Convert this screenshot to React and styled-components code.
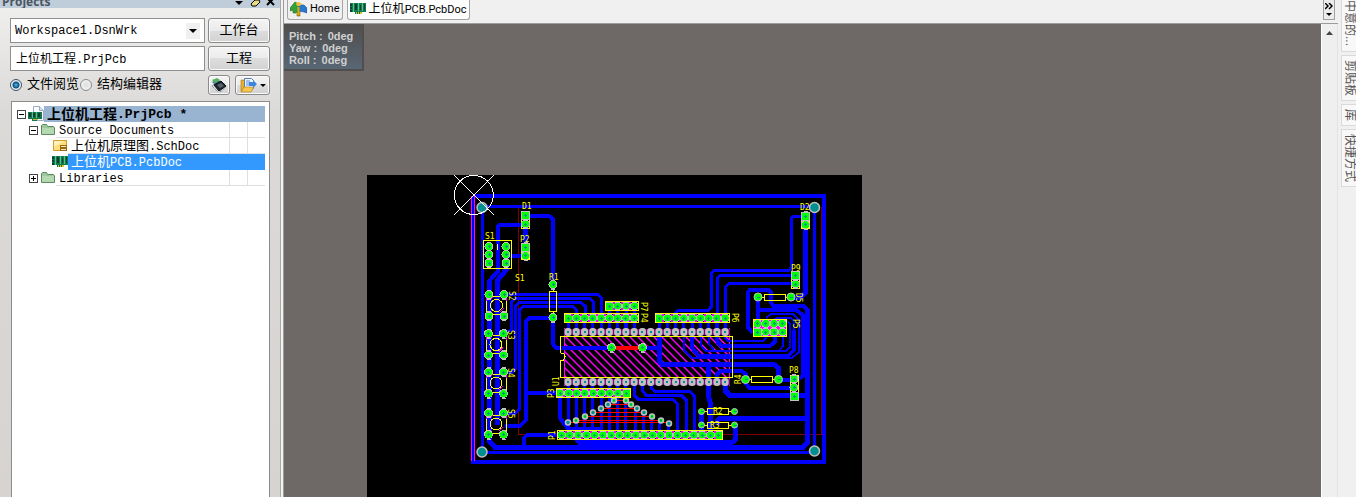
import React, { useState } from "react";
import styled, { createGlobalStyle } from "styled-components";

const GlobalStyle = createGlobalStyle`
    html, body {
        margin: 0;
        background: #f0f0f0;
    }

    *, *::before, *::after {
        box-sizing: border-box;
    }

    button, input, select {
        font: inherit;
        color: inherit;
        margin: 0;
    }
`

const mono = `"Liberation Mono", "Noto Sans CJK SC", monospace`;
const sans = `"Liberation Sans", "Noto Sans CJK SC", sans-serif`;

const Page = styled.div`
    display: flex;
    min-height: 100vh;
    font-family: ${mono};
    font-size: 12px;
    line-height: 16px;
    color: #000;
    overflow: hidden;
`

const Panel = styled.aside`
    flex: 0 0 280px;
    display: flex;
    flex-direction: column;
    background: linear-gradient(#f0f0ef, #dcdad8 110px, #d6d3d1);
`

const PanelTitle = styled.header`
    display: flex;
    justify-content: space-between;
    align-items: flex-end;
    height: 8px;
    padding: 0 4px 0 2px;
    overflow: hidden;
    background: #bfcddb;

    h1 {
        margin: 0;
        font: bold 12px/12px "Open Sans", sans-serif;
        color: #4c5560;
    }
`

const Controls = styled.div`
    display: grid;
    grid-template-columns: 1fr 62px;
    gap: 3px;
    padding: 10px 10px 0;
`

const SelectBox = styled.div`
    display: flex;
    align-items: center;
    height: 25px;
    padding-right: 4px;
    border: 1px solid #8e8f8f;
    background: #fff;

    select {
        flex: 1;
        min-width: 0;
        padding: 0 4px;
        border: none;
        outline: none;
        appearance: none;
        background: none;
    }
`

const ArrowBox = styled.span`
    display: grid;
    place-items: center;
    width: 14px;
    height: 16px;
    background: #f0f0f0;
    pointer-events: none;
`

const TextBox = styled.input`
    width: 100%;
    height: 25px;
    padding: 0 5px 2px;
    border: 1px solid #8e8f8f;
    background: #fff;
    outline: none;
`

const Button = styled.button`
    display: flex;
    align-items: center;
    justify-content: center;
    gap: 3px;
    width: ${props => props.$width || "100%"};
    height: ${props => props.$small ? "20px" : "25px"};
    padding: 0;
    border: 1px solid #8a8a8a;
    border-radius: 3px;
    font-size: 13px;
    background: linear-gradient(#f4f4f4, #ebebeb 50%, #dddddd 50%, #d2d2d2);
    box-shadow: inset 0 0 0 1px #fafafa;
`

const ViewRow = styled.div`
    display: flex;
    align-items: center;
    height: 28px;
    padding: 0 10px;
    font-size: 13px;
`

const Radio = styled.label`
    display: flex;
    align-items: center;
    gap: 5px;
    margin-right: 1px;
    white-space: nowrap;

    input {
        appearance: none;
        width: 12px;
        height: 12px;
        border: 1px solid #858b91;
        border-radius: 50%;
        background: radial-gradient(#dedede, #f8f8f8);
    }

    input:checked {
        border-color: #35536e;
        background: radial-gradient(circle, #3fc0ee 0, #114a78 3px, #e8eef2 4px);
    }
`

const ViewButtons = styled.div`
    display: flex;
    gap: 5px;
    margin-left: auto;
`

const Tree = styled.ul`
    flex: 1;
    margin: 2px 10px 0 11px;
    padding: 4px 4px 0 5px;
    border: 1px solid #8c8c8c;
    border-bottom: none;
    background: #fff;
    list-style: none;
`

const TreeRow = styled.li`
    display: flex;
    align-items: center;
    height: 16px;
    padding-left: ${props => props.$level * 12}px;
    white-space: pre;

    > svg {
        flex: none;
    }
`

const Toggle = styled.button`
    display: grid;
    place-items: center;
    flex: none;
    width: 9px;
    height: 9px;
    margin-right: 2px;
    padding: 0;
    border: 1px solid #444;
    background: #fff;
    visibility: ${props => props.$hidden ? "hidden" : "visible"};
`

const TreeLabel = styled.span`
    flex: 1;
    display: flex;
    align-items: center;
    height: 16px;
    padding: 2px 0 0 3px;
    border-bottom: ${props => props.$tone ? "none" : "1px solid #dfdfdf"};
    font-size: ${props => props.$tone === "project" ? 13 : 12}px;
    font-weight: ${props => props.$tone === "project" ? "bold" : "normal"};
    color: ${props => props.$tone === "active" ? "#fff" : "#000"};
    background: ${props => props.$tone === "active" ? "#3399ff" : props.$tone === "project" ? "#99b4d1" : "none"};
`

const Cjk = styled.span`
    font-size: ${props => props.$size || 13}px;
`

const TreeCell = styled.span`
    width: 18px;
    height: 16px;
    border-left: 1px solid #dfdfdf;
    border-bottom: 1px solid #dfdfdf;
`

const Splitter = styled.div`
    flex: 0 0 4px;
    background: #f2f2f2;
    border-left: 1px solid #a8a8a8;
    border-right: 1px solid #9b9b9b;
`

const Main = styled.main`
    flex: 1;
    min-width: 0;
    display: flex;
    flex-direction: column;
    font-family: ${sans};
`

const TabBar = styled.nav`
    display: flex;
    align-items: flex-start;
    gap: 4px;
    height: 24px;
    padding: 0 3px;
    border-bottom: 1px solid #9c9c9c;
    background: #f0f0f0;
`

const Tab = styled.button`
    display: flex;
    align-items: center;
    gap: 3px;
    height: 20px;
    padding: 0 2px 1px;
    border: 1px solid #a5a5a5;
    border-top: none;
    border-radius: 0 0 3px 3px;
    font: 11px/16px Roboto, "Noto Sans CJK SC", sans-serif;
    background: ${props => props.$active ? "#fdfdfd" : "#f0f0f0"};
    white-space: nowrap;
`

const MoreTabs = styled.button`
    display: grid;
    place-items: center;
    width: 12px;
    height: 20px;
    margin-left: auto;
    padding: 0;
    border: 1px solid #a0a0a0;
    border-top: none;
    background: #ececec;
`

const Workspace = styled.div`
    flex: 1;
    display: flex;
`

const Canvas = styled.section`
    position: relative;
    flex: 1;
    padding: 151px 0 0 83px;
    background: #6e6967;

    > svg {
        display: block;
    }
`

const Orientation = styled.dl`
    position: absolute;
    top: 0;
    left: 0;
    width: 80px;
    margin: 0;
    padding: 6px 5px 3px;
    border: solid #504e4d;
    border-width: 0 2px 2px 0;
    font: bold 11px/12px ${sans};
    color: #d0d0d0;
    background: linear-gradient(#504e4d, #586674);

    div {
        display: flex;
        gap: 5px;
    }

    dt, dd {
        margin: 0;
    }
`

const Scrollbar = styled.div`
    flex: 0 0 17px;
    display: flex;
    justify-content: center;
    padding-top: 7px;
    border-left: 1px solid #fff;
    border-right: 1px solid #e3e3e3;
    background: #efefef;
`

const SideTabs = styled.nav`
    flex: 0 0 18px;
    min-width: 0;
    display: flex;
    flex-direction: column;
    gap: 3px;
    padding-left: 3px;
    background: #f0f0f0;
`

const SideTab = styled.button`
    width: 100%;
    height: ${props => props.$height}px;
    padding: ${props => props.$cut ? "0 0 0 2px" : "4px 0 4px 2px"};
    border: 1px solid #dadada;
    border-right: none;
    border-top-width: ${props => props.$cut ? 0 : 1}px;
    font: 12px/12px ${sans};
    color: #555;
    background: #f8f8f8;
    writing-mode: vertical-rl;
    text-orientation: sideways;
    text-align: left;
    white-space: nowrap;
`

const BoardLabel = styled.text`
    font: 8px "DejaVu Sans Mono", monospace;
    fill: #ffff00;
`

const Caret = ({ width = 8 }) => (
    <svg width={width} height={width / 2} viewBox="0 0 8 4"><path d="M0 0h8L4 4z" fill="#000" /></svg>
)

const BoardIcon = () => (
    <svg width="16" height="14" viewBox="0 0 16 14">
        <path d="M0 1h16v9h-5v2H5v-2H0z" fill="#0f7a4c" />
        <path d="M0 2h2v2H0zM0 5h2v2H0zM0 8h2v2H0zM5 2h2v6H5z" fill="#103c36" />
        <path d="M3.500 1v9M8.500 1v8M12.500 1v8" stroke="#58c483" />
        <path d="M10 3h1v5h-1zM14 2h1v6h-1z" fill="#173f3f" />
        <path d="M6 10h6v2H6z" fill="#d5c637" />
        <path d="M7.500 10v2M9.500 10v2" stroke="#147040" />
    </svg>
)

const ProjectIcon = () => (
    <svg width="16" height="16" viewBox="0 0 16 16">
        <path d="M5.500 .5h6l4 4v10h-10z" fill="#f7faff" stroke="#9aabc0" />
        <path d="M11.500 .5v4h4" fill="#cfe0ef" stroke="#9aabc0" />
        <path d="M0 6h14v7H9v2H4v-2H0z" fill="#14744a" />
        <path d="M1 7h2v4H1zM5 7h2v4H5zM10 7h2v4h-2z" fill="#103c36" />
        <path d="M4.500 6v6M8.500 6v6" stroke="#58c483" />
        <path d="M5 13h5v1H5z" fill="#c9bd3a" />
    </svg>
)

const FolderIcon = () => (
    <svg width="16" height="14" viewBox="0 0 16 14">
        <path d="M1.500 11.500v-9l1-1h4l1 2h6l1 1v7z" fill="#9cc99a" stroke="#5e8a62" />
        <path d="M2 5h12v6H2z" fill="#b4d8b0" />
    </svg>
)

const SchematicIcon = () => (
    <svg width="16" height="14" viewBox="0 0 16 14">
        <path d="M1.500 1.500h13v10h-13z" fill="#ffdf79" stroke="#d39b28" />
        <path d="M2 2h10L2 8z" fill="#fff2b8" />
        <path d="M8 6h7v6H8z" fill="#9a6a12" />
        <path d="M9 7.500h5M9 10.500h5" stroke="#ffe9a8" />
    </svg>
)

const HomeIcon = () => (
    <svg width="17" height="16" viewBox="0 0 17 16">
        <path d="M7 3h3v12H7z" fill="#c99410" stroke="#7c5907" strokeWidth=".6" />
        <path d="M0 7l5-6 4 2v5l-3 4H3V9L0 10z" fill="#35a03a" stroke="#1d6b25" strokeWidth=".6" />
        <path d="M9 4h5l3 3v5l-3-1-5-1z" fill="#2878d0" stroke="#174f98" strokeWidth=".6" />
        <path d="M6 2l3-1 3 2-2 2H7z" fill="#edbb39" />
        <path d="M7.500 6h2v8h-2z" fill="#dba91e" />
    </svg>
)

const ChipIcon = () => (
    <svg width="16" height="16" viewBox="0 0 16 16">
        <path d="M1 5l5-3 8 5-6 4z" fill="#3b7f92" />
        <path d="M1 3l5-2 3 2-5 3z" fill="#57b35e" />
        <path d="M3 8l7-4 5 5-7 5z" fill="#20262d" stroke="#0d1014" />
        <path d="M6 8l4-2 3 3-4 2z" fill="#56636f" />
        <path d="M1 9l6 6M3 7l-2 2M9 15l6-5" stroke="#6f7f90" strokeDasharray="1 1" />
    </svg>
)

const OpenDocIcon = () => (
    <svg width="17" height="16" viewBox="0 0 17 16">
        <path d="M1 3h5l1 1v10H1z" fill="#e9b030" stroke="#a87516" strokeWidth=".6" />
        <path d="M4.500 1.500h7l2 2v8h-9z" fill="#eff5ff" stroke="#5c7bb0" />
        <path d="M6 4h4M6 6h4M6 8h3" stroke="#5d8bd0" />
        <path d="M1 15l3-5h10l-3 5z" fill="#f6c750" stroke="#a87516" strokeWidth=".6" />
        <path d="M9 5h4V3l4 4-4 4V9H9z" fill="#3c86e0" />
    </svg>
)

// one pin is a little over 8px from the next
const PITCH = 8.27;
const pins = (start, count) => Array.from({ length: count }, (_, i) => start + i * PITCH);

const TRACES = [
    [4, "M474 195.500H824V461.500H473V196"],
    [3, "M482 206.500H814.500V452H482Z"],
    [5, "M489 280V441L495 447.500H803L807 443V309"],
    [4, "M807.500 310L803 305.500H773L770.500 302V292L768 289.500H750L747.500 293V327L753 333"],
    [4, "M528 216H549L553 219V285M522 224.500H500L497.500 227V272L489 281"],
    [5, "M525.500 216V255.500M506 263V270L497 281V425"],
    [4, "M525 255.500H506M553 317V344L556 347.500H660M553 317.500H530L526 321V420L520 426H505"],
    [4, "M526 393H560M524 447V438L527 435H560M560 393V418L568 428.500H599L603 432"],
    [3, "M504 294.500H598L601.500 298V318M503 333.500L511.500 330V302L515 298.500H590L593.300 302V318"],
    [3, "M503 372.500H512L515.500 369V306L519 302.500H581L585 306V318M503 413.500H515L519.500 409V310L523 306.500H573L576.500 310V318"],
    [3, "M805 216H794L791.500 218V267L789 270.500H714L711 273.500V307L708 310.500H678L675.500 313V332"],
    [3, "M795 275.500H720L717.500 278V332M795 283.500H729L725.500 287V332"],
    [5, "M805.500 224V292L801 297H791"],
    [4, "M757.500 297V323M757.500 309.500H796L802.500 315V376L799 379H794"],
    [2, "M725 332V338L728 341H763L766 338V332M709 332V343L714 351H779L783 346V332"],
    [4, "M717 332V341L721 346H770L774.500 342V332"],
    [2, "M700.500 332V345L706 351H786L790 347V324L787 321M684 332V350L692 358H792L799 352V320L793 314H771L766 318"],
    [4, "M692 332V348L699 356H788L794 350V330"],
    [2, "M794 332V321L790 317.500H778L774 320"],
    [5, "M659 332V361L662 364.500H774L778.500 368V379M708.500 365V396L710 402V434"],
    [4, "M717 382V374L721 371H742L745.500 374V383L749 387.500H794M778 379.500H794"],
    [5, "M725.500 382V391L730 395.500H807M717 425V421L720 418.500H807"],
    [3, "M634 382V395L638 399H672L677.500 404V434M642.500 382V391L646 395H681L686 400V434M651 382V388L655 391.500H690L694 396V434"],
    [5, "M577 435V440L580 442.500H732L735 440V425M701.500 411V434"],
];

const NODES = [
    [568, 422.5], [576, 420.5], [585, 416.5], [593, 412.5], [601, 408.5], [608, 404.5], [614, 400.5],
    [626, 400.5], [631, 404.5], [637, 408.5], [644, 412.5], [652, 416.5], [661, 420.5], [669, 423.5],
];

const HEADERS = [
    { y: 306, xs: pins(609.5, 4) },
    { y: 318, xs: pins(568, 9) },
    { y: 318, xs: pins(659, 9) },
    { y: 393, xs: pins(560, 9) },
    { y: 435, xs: pins(561.5, 20) },
];

const SMALL_HEADERS = [
    [525.5, [215.5, 224]],
    [525.5, [247, 255.5]],
    [805.5, [216, 224.5]],
    [795.5, [275.5, 284]],
    [794, [379, 387.5, 396]],
];

const SWITCHES = [[496.5, 305.5], [496, 344.5], [496, 383], [496, 424]];

const RESISTORS = [
    [758, 791, 297], [745.5, 778.5, 379.5], [701.5, 734.5, 411.5], [701.5, 734.5, 425],
];

const LABELS = [
    ["D1", 522, 209], ["S1", 485, 239], ["P2", 520, 242], ["S1", 515, 281], ["R1", 549, 280],
    ["D2", 800, 210], ["P9", 791, 271], ["P8", 789, 373], ["R3", 710, 428], ["R2", 713, 414],
    ["S2", 509, 291, 90], ["S3", 508, 330, 90], ["S4", 508, 368, 90], ["S5", 508, 409, 90],
    ["P7", 641, 302, 90], ["P4", 641, 313, 90], ["P6", 732, 313, 90], ["P5", 793, 319, 90],
    ["D5", 796, 293, 90], ["U1", 559, 386, -90], ["P3", 554, 398, -90], ["P1", 555, 440, -90],
    ["R4", 741, 384, -90],
];

const Pad = ({ x, y, square }) => (
    <g>
        <path d={`M${x - 2} ${y - 4.5}h4M${x - 2} ${y + 4.5}h4`} stroke="#c0c0c0" />
        {square
            ? <rect x={x - 4} y={y - 4} width="8" height="8" fill="#00ff00" stroke="#c0c0c0" />
            : <circle cx={x} cy={y} r="4" fill="#00ff00" stroke="#c0c0c0" />}
        <path d={`M${x - 1.5} ${y}h3M${x} ${y - 1.5}v3`} stroke="#009090" />
    </g>
)

const HoleRow = ({ y }) => (
    <g>
        <rect x="564" y={y - 3} width="166" height="6" fill="#800080" />
        {pins(568, 20).map((x) => (
            <g key={x}>
                <rect x={x - 3.5} y={y - 4} width="7" height="8" rx="3" fill="#c0c0c0" shapeRendering="auto" />
                <rect x={x - 1} y={y - 1} width="2" height="2" fill="#009090" />
            </g>
        ))}
    </g>
)

const Board = () => (
    <svg width="495" height="322" viewBox="367 175 495 322" shapeRendering="crispEdges" role="img" aria-label="PCB">
        <defs>
            <clipPath id="chip"><rect x="564" y="337" width="166" height="41" /></clipPath>
        </defs>
        <rect x="367" y="175" width="495" height="322" fill="#000" />
        <path d="M518.500 207V434.500H821.500V207" fill="none" stroke="#800000" />
        <g clipPath="url(#chip)" stroke="#ff00ff" strokeWidth="1.400" shapeRendering="auto">
            {Array.from({ length: 26 }, (_, i) => (
                <path key={i} d={`M${526 + i * 8} 337l41 41`} />
            ))}
        </g>
        <path d="M564.500 328V386M729.500 328V386" stroke="#ff00ff" />
        <g fill="none" stroke="#0000ff">
            {TRACES.map(([width, d]) => <path key={d} d={d} strokeWidth={width} />)}
            {HEADERS[0].xs.map((x) => <path key={x} d={`M${x} 306V332`} strokeWidth="3" />)}
            {HEADERS[1].xs.map((x) => <path key={x} d={`M${x} 318V332`} strokeWidth="3" />)}
            {HEADERS[2].xs.map((x) => <path key={x} d={`M${x} 318V332`} strokeWidth="3" />)}
            {pins(568, 8).map((x) => <path key={x} d={`M${x} 382V434`} strokeWidth="3" />)}
            {pins(635, 5).map((x, i) => <path key={x} d={`M${x} ${410 + i * 4}V434`} strokeWidth="3" />)}
        </g>
        <path d="M471.500 196V461M474.500 196V461" stroke="#ff00ff" />

        {SWITCHES.map(([x, y]) => (
            <g key={y} fill="none" stroke="#ffff00">
                <path d={`M${x - 10} ${y - 9}v18M${x + 10} ${y - 9}v18`} stroke="#ff00ff" />
                <path d={`M${x - 10} ${y - 9}h20M${x - 10} ${y + 9}h20M${x - 10} ${y - 5}v12M${x + 10} ${y - 5}v12`} />
                <circle cx={x} cy={y} r="6" />
                <path d={`M${x - 7} ${y - 6}l4 -3M${x + 3} ${y + 7}l4 -4`} stroke="#ff00ff" />
                {[[-7.5, -11], [7.5, -11], [-7.5, 10.5], [7.5, 10.5]].map(([dx, dy]) => (
                    <Pad key={`${dx}${dy}`} x={x + dx} y={y + dy} />
                ))}
            </g>
        ))}

        <rect x="483.500" y="240.500" width="28" height="28" fill="none" stroke="#ffff00" />
        <path d="M497.500 244v6" stroke="#ffff00" />
        {[489, 506].map((x) => [246.5, 254.5, 263].map((y) => <Pad key={`${x}${y}`} x={x} y={y} />))}

        <path d="M560.500 353V336.500H732.500V377.500H560.500V360M560.500 353h3l1.500 3.500l-1.500 3.500h-3" fill="none" stroke="#ffff00" />
        <HoleRow y={332} />
        <HoleRow y={382} />

        {NODES.slice(0, 7).map(([x, y], i) => (
            <path key={x} d={`M${x} ${y}H${NODES[13 - i][0]}`} stroke="#ff0000" />
        ))}
        <g shapeRendering="auto">
            {NODES.map(([x, y], i) => (
                <g key={x}>
                    <circle cx={x} cy={y} r="2.500" fill={[1, 2, 6, 7, 8, 11, 12].includes(i) ? "#00ff00" : "#009090"} stroke="#c0c0c0" strokeWidth="1.500" />
                    <circle cx={x} cy={y} r="1" fill="#009090" />
                </g>
            ))}
        </g>

        {HEADERS.map(({ y, xs }, row) => (
            <g key={row}>
                {xs.map((x, i) => <Pad key={x} x={x} y={y} square={row > 2 ? i === xs.length - 1 : i === 0} />)}
                {xs.slice(1).map((x) => (
                    <g key={x}>
                        <path d={`M${x - 4} ${y - 4}v2M${x - 4} ${y + 2}v2`} stroke="#ff00ff" strokeWidth="2" />
                        <path d={`M${x - 4} ${y - 2}v4`} stroke="#c0c0c0" />
                    </g>
                ))}
                <rect x={xs[0] - 4} y={y - 4.5} width={xs[xs.length - 1] - xs[0] + 8} height="9" fill="none" stroke="#ffff00" />
            </g>
        ))}

        {SMALL_HEADERS.map(([x, ys]) => (
            <g key={`${x}${ys[0]}`}>
                <rect x={x - 4} y={ys[0] - 4} width="8" height={ys[ys.length - 1] - ys[0] + 8} fill="#000" stroke="#ffff00" />
                {ys.map((y, i) => <Pad key={y} x={x} y={y} square={ys.length === 3 ? i === 2 : i === 0} />)}
            </g>
        ))}

        <rect x="753.500" y="319.500" width="33" height="17" fill="#ff00ff" />
        {pins(757.5, 4).map((x) => [323.5, 332].map((y) => <Pad key={`${x}${y}`} x={x} y={y} square={x < 758 && y > 330} />))}
        <rect x="753.500" y="319.500" width="33" height="17" fill="none" stroke="#ffff00" />

        {RESISTORS.map(([left, right, y]) => (
            <g key={y}>
                <path d={`M${left} ${y}h6M${right} ${y}h-6M${left + 6} ${y - 3}h21v6h-21z`} fill="none" stroke="#ffff00" />
                <g shapeRendering="auto" fill="#00ff00" stroke="#c0c0c0">
                    <circle cx={left} cy={y} r={y > 400 ? 3 : 4} />
                    <circle cx={right} cy={y} r={y > 400 ? 3 : 4} />
                </g>
                <path d={`M${left - 1} ${y}h3M${right - 1} ${y}h3`} stroke="#009090" />
            </g>
        ))}

        <path d="M553 285v32" stroke="#ffff00" />
        <rect x="549.500" y="291.500" width="7" height="20" fill="#000" stroke="#ffff00" />
        <path d="M550 294.500h6M550 298.500h6M550 302.500h6M550 306.500h6" stroke="#0000ff" strokeWidth="3" />
        <Pad x={553} y={284.5} />
        <Pad x={553} y={317.5} />

        <path d="M612 347.500H642" stroke="#ff0000" strokeWidth="4" />
        <Pad x={611.5} y={347.5} />
        <Pad x={642.5} y={347.5} />

        <g shapeRendering="auto">
            {[[482, 207.5], [814.5, 207.5], [482, 452], [814.5, 451]].map(([x, y]) => (
                <circle key={`${x}${y}`} cx={x} cy={y} r="5" fill="#009090" stroke="#c0c0c0" strokeWidth="1.500" />
            ))}
        </g>
        <g fill="none" stroke="#fff">
            <circle cx="473.800" cy="195" r="19.500" />
            <path d="M454 175l40 40M494 175l-40 40" />
        </g>

        {LABELS.map(([text, x, y, angle = 0]) => (
            <BoardLabel key={`${text}${x}`} transform={`translate(${x} ${y}) rotate(${angle})`}>{text}</BoardLabel>
        ))}
    </svg>
)

const TREE = [
    { level: 0, icon: <ProjectIcon />, open: true, tone: "project", cjk: "上位机工程", name: ".PrjPcb *" },
    { level: 1, icon: <FolderIcon />, open: true, name: "Source Documents" },
    { level: 2, icon: <SchematicIcon />, cjk: "上位机原理图", name: ".SchDoc" },
    { level: 2, icon: <BoardIcon />, tone: "active", cjk: "上位机", name: "PCB.PcbDoc" },
    { level: 1, icon: <FolderIcon />, open: false, name: "Libraries" },
];

const SIDE_TABS = [
    { name: "中意的...", height: 52, cut: true },
    { name: "剪贴板", height: 46 },
    { name: "库", height: 22 },
    { name: "快捷方式", height: 58 },
];

const ROTATION = [["Pitch", "0deg"], ["Yaw", "0deg"], ["Roll", "0deg"]];

export default function App() {
    const [view, setView] = useState("files");
    const [project, setProject] = useState("上位机工程.PrjPcb");

    return (
        <>
            <GlobalStyle />
            <Page>
                <Panel>
                    <PanelTitle>
                        <h1>Projects</h1>
                        <svg width="42" height="8" viewBox="0 0 42 8">
                            <path d="M1 1h8L5 5z" fill="#000" />
                            <path d="M17 4l4-4h4l1 2-4 4h-4z" fill="#e8dc80" stroke="#000" />
                            <path d="M33 -2l7 7M40 -2l-7 7" stroke="#000" strokeWidth="2" />
                        </svg>
                    </PanelTitle>
                    <Controls>
                        <SelectBox>
                            <select aria-label="Workspace">
                                <option>Workspace1.DsnWrk</option>
                            </select>
                            <ArrowBox><Caret /></ArrowBox>
                        </SelectBox>
                        <Button>工作台</Button>
                        <TextBox aria-label="Project" value={project} onChange={(e) => setProject(e.target.value)} />
                        <Button>工程</Button>
                    </Controls>
                    <ViewRow>
                        <Radio>
                            <input type="radio" name="view" checked={view === "files"} onChange={() => setView("files")} />
                            文件阅览
                        </Radio>
                        <Radio>
                            <input type="radio" name="view" checked={view === "structure"} onChange={() => setView("structure")} />
                            结构编辑器
                        </Radio>
                        <ViewButtons>
                            <Button $small $width="22px" aria-label="Components"><ChipIcon /></Button>
                            <Button $small $width="35px" aria-label="Open document">
                                <OpenDocIcon />
                                <Caret width={6} />
                            </Button>
                        </ViewButtons>
                    </ViewRow>
                    <Tree>
                        {TREE.map(({ level, icon, open, tone, cjk, name }) => (
                            <TreeRow key={name} $level={level}>
                                <Toggle $hidden={open === undefined} aria-label={open ? "Collapse" : "Expand"}>
                                    <svg width="5" height="5" viewBox="0 0 5 5">
                                        <path d={open ? "M0 2.500h5" : "M0 2.500h5M2.500 0v5"} stroke="#000" />
                                    </svg>
                                </Toggle>
                                {icon}
                                <TreeLabel $tone={tone}>
                                    {cjk && <Cjk $size={tone === "project" ? 14 : 13}>{cjk}</Cjk>}
                                    {name}
                                </TreeLabel>
                                {!tone && <><TreeCell /><TreeCell /></>}
                            </TreeRow>
                        ))}
                    </Tree>
                </Panel>
                <Splitter />
                <Main>
                    <TabBar>
                        <Tab>
                            <HomeIcon />
                            Home
                        </Tab>
                        <Tab $active>
                            <BoardIcon />
                            <span><Cjk $size={12}>上位机</Cjk>PCB.PcbDoc</span>
                        </Tab>
                        <MoreTabs aria-label="More tabs">
                            <svg width="8" height="14" viewBox="0 0 8 14">
                                <path d="M0 0l3 3-3 3M4 0l3 3-3 3" fill="none" stroke="#000" strokeWidth="1.500" />
                                <path d="M1 10h6l-3 3z" fill="#000" />
                            </svg>
                        </MoreTabs>
                    </TabBar>
                    <Workspace>
                        <Canvas>
                            <Orientation>
                                {ROTATION.map(([axis, value]) => (
                                    <div key={axis}>
                                        <dt>{axis} :</dt>
                                        <dd>{value}</dd>
                                    </div>
                                ))}
                            </Orientation>
                            <Board />
                        </Canvas>
                        <Scrollbar>
                            <svg width="7" height="4" viewBox="0 0 7 4"><path d="M0 4h7L3.500 0z" fill="#444" /></svg>
                        </Scrollbar>
                    </Workspace>
                </Main>
                <SideTabs>
                    {SIDE_TABS.map(({ name, height, cut }) => (
                        <SideTab key={name} $height={height} $cut={cut}>{name}</SideTab>
                    ))}
                </SideTabs>
            </Page>
        </>
    );
}
